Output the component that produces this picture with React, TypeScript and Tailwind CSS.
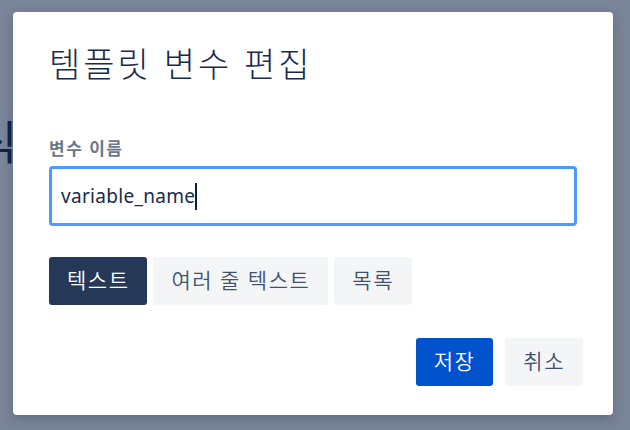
import React from "react";

export default function App() {
  const font = { fontFamily: '"Noto Sans", "Noto Sans CJK KR", sans-serif' };
  return (
    <div className="relative w-[630px] h-[430px] overflow-hidden bg-white" style={font}>
      <div className="absolute left-[-25px] top-[118px] text-[46px] leading-none text-[#172b4d]">식</div>
      <div className="absolute inset-0 bg-[rgba(9,30,66,0.54)] pl-[13px] pt-[12px]">
        <div className="w-[600px] h-[403px] bg-white rounded-[4px] shadow-[0_4px_12px_rgba(9,30,66,0.25)] flex flex-col">
          <div className="px-[36px] pt-[28px]">
            <h1 className="text-[34px] leading-[48px] font-light text-[#172b4d] tracking-[3px]">템플릿 변수 편집</h1>
            <div className="mt-[50px] text-[17px] font-bold leading-[22px] text-[#6b778c] tracking-[1.5px]">변수 이름</div>
            <div className="mt-[6px] h-[60px] w-[528px] rounded-[4px] border-[3px] border-[#4c9aff] flex items-center px-[9px]">
              <span className="text-[19px] text-[#172b4d] tracking-[0.3px]">variable_name</span>
              <span className="w-[2px] h-[27px] bg-[#091e42]" />
            </div>
            <div className="mt-[31px] flex gap-[6px]">
              <button className="h-[48px] px-[18px] rounded-[3px] bg-[#253858] text-white text-[21px] font-[350] tracking-[1.5px]">텍스트</button>
              <button className="h-[48px] px-[18px] rounded-[3px] bg-[#f4f5f7] text-[#42526e] text-[21px] font-[350] tracking-[1.5px]">여러 줄 텍스트</button>
              <button className="h-[48px] px-[18px] rounded-[3px] bg-[#f4f5f7] text-[#42526e] text-[21px] font-[350] tracking-[1.5px]">목록</button>
            </div>
          </div>
          <div className="mt-auto flex justify-end gap-[12px] pr-[30px] pb-[29px]">
            <button className="h-[48px] px-[18px] rounded-[3px] bg-[#0052cc] text-white text-[21px] font-[350] tracking-[1.5px]">저장</button>
            <button className="h-[48px] px-[18px] rounded-[3px] bg-[#f4f5f7] text-[#42526e] text-[21px] font-[350] tracking-[1.5px]">취소</button>
          </div>
        </div>
      </div>
    </div>
  );
}
